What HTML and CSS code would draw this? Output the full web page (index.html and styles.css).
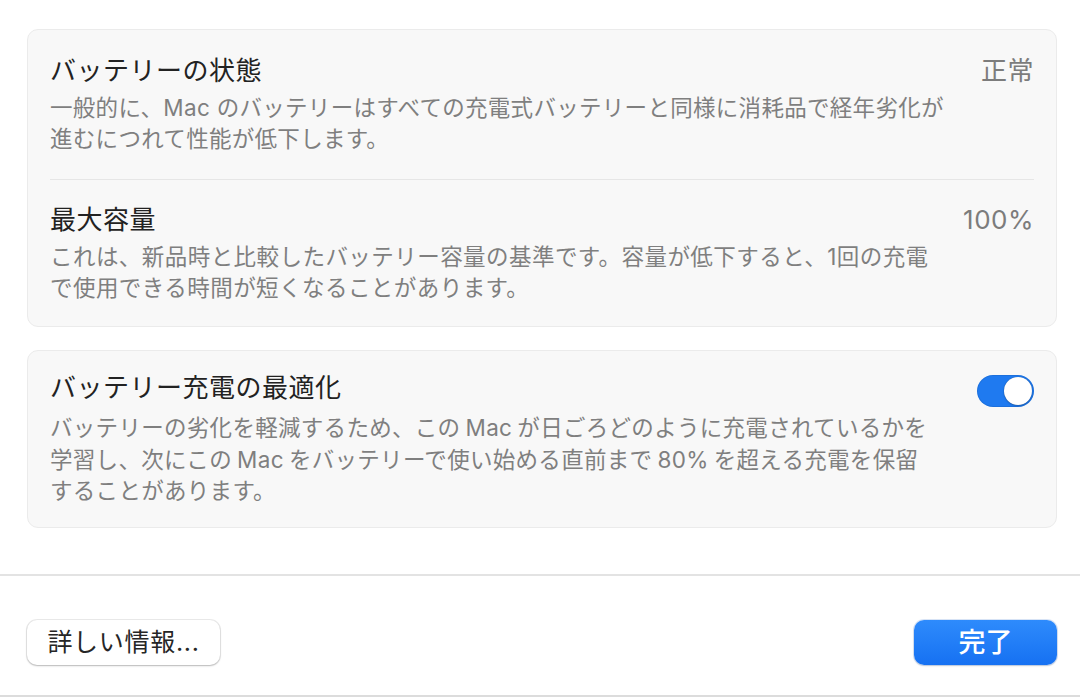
FILE: index.html
```html
<!DOCTYPE html>
<html lang="ja">
<head>
<meta charset="utf-8">
<link rel="stylesheet" href="styles.css">
</head>
<body>
<div class="page">
  <div class="content">
    <section class="card">
      <div class="row">
        <div class="text">
          <div class="title">バッテリーの状態</div>
          <div class="desc">一般的に、Mac のバッテリーはすべての充電式バッテリーと同様に消耗品で経年劣化が<br>進むにつれて性能が低下します。</div>
        </div>
        <div class="value">正常</div>
      </div>
      <div class="divider"></div>
      <div class="row row-second">
        <div class="text">
          <div class="title">最大容量</div>
          <div class="desc desc-cap">これは、新品時と比較したバッテリー容量の基準です。容量が低下すると、1回の充電<br>で使用できる時間が短くなることがあります。</div>
        </div>
        <div class="value">100%</div>
      </div>
    </section>
    <section class="card card-opt">
      <div class="row">
        <div class="text">
          <div class="title">バッテリー充電の最適化</div>
          <div class="desc desc-opt">バッテリーの劣化を軽減するため、この Mac が日ごろどのように充電されているかを<br>学習し、次にこの Mac をバッテリーで使い始める直前まで 80% を超える充電を保留<br>することがあります。</div>
        </div>
        <div class="toggle"><div class="knob"></div></div>
      </div>
    </section>
  </div>
  <footer class="footer">
    <button class="btn btn-plain">詳しい情報...</button>
    <button class="btn btn-primary">完了</button>
  </footer>
</div>
</body>
</html>
```

FILE: styles.css
```css
html, body {
  margin: 0;
  padding: 0;
  background: #ffffff;
}
body {
  font-family: Inter, "Noto Sans CJK JP", sans-serif;
  color: #262626;
  width: 1080px;
  height: 697px;
  overflow: hidden;
}
.page {
  display: flex;
  flex-direction: column;
  height: 697px;
  border-bottom: 2px solid #dcdcdc;
  box-sizing: border-box;
}
.content {
  padding: 29px 23px 46px 27px;
  display: flex;
  flex-direction: column;
  gap: 23px;
  border-bottom: 2px solid #e3e3e3;
}
.card {
  background: #f8f8f8;
  border: 1px solid #ebebeb;
  border-radius: 11px;
  padding: 0 22px;
}
.row {
  display: flex;
  justify-content: space-between;
  align-items: flex-start;
  padding: 25px 0 25px;
}
.row-second {
  padding: 24px 0 23px;
}
.card-opt .row {
  padding: 21px 0 20px;
}
.title {
  font-size: 26px;
  line-height: 32px;
  color: #222222;
  letter-spacing: 0.5px;
}
.desc {
  margin-top: 5px;
  font-size: 22.5px;
  line-height: 31px;
  color: #7f7f7f;
  white-space: nowrap;
  letter-spacing: 0.3px;
}
.desc-cap {
  letter-spacing: 0.45px;
}
.desc-opt {
  margin-top: 8px;
  line-height: 31.5px;
  word-spacing: -1.5px;
}
.value {
  font-size: 26px;
  line-height: 32px;
  color: #7c7c7c;
  letter-spacing: 0.5px;
}
.divider {
  height: 1px;
  background: #e6e6e6;
}
.toggle {
  width: 57px;
  height: 32px;
  border-radius: 16px;
  background: #1f7af0;
  margin-top: 3px;
  position: relative;
  box-shadow: inset 0 0 0 1px rgba(0,0,0,0.08);
}
.knob {
  position: absolute;
  right: 2px;
  top: 2px;
  width: 28px;
  height: 28px;
  border-radius: 50%;
  background: #ffffff;
  box-shadow: 0 0 1px rgba(0,0,0,0.4), 0 1px 2px rgba(0,0,0,0.2);
}
.footer {
  flex: 1;
  display: flex;
  justify-content: space-between;
  align-items: flex-start;
  padding: 44px 23px 0 27px;
}
.btn {
  font-family: Inter, "Noto Sans CJK JP", sans-serif;
  font-size: 25px;
  height: 45px;
  border-radius: 10px;
  border: none;
  padding: 0;
  line-height: 45px;
}
.btn-plain {
  width: 193px;
  background: #ffffff;
  color: #262626;
  letter-spacing: 0.7px;
  box-shadow: 0 0 0 1px rgba(0,0,0,0.08), 0 1px 2px rgba(0,0,0,0.22);
}
.btn-primary {
  width: 143px;
  background: linear-gradient(#2e8bfc, #1671f2);
  color: #ffffff;
  font-size: 27px;
  font-weight: 500;
  box-shadow: 0 0 0 1px rgba(0,80,200,0.15), 0 1px 2px rgba(0,0,0,0.15);
}
```
